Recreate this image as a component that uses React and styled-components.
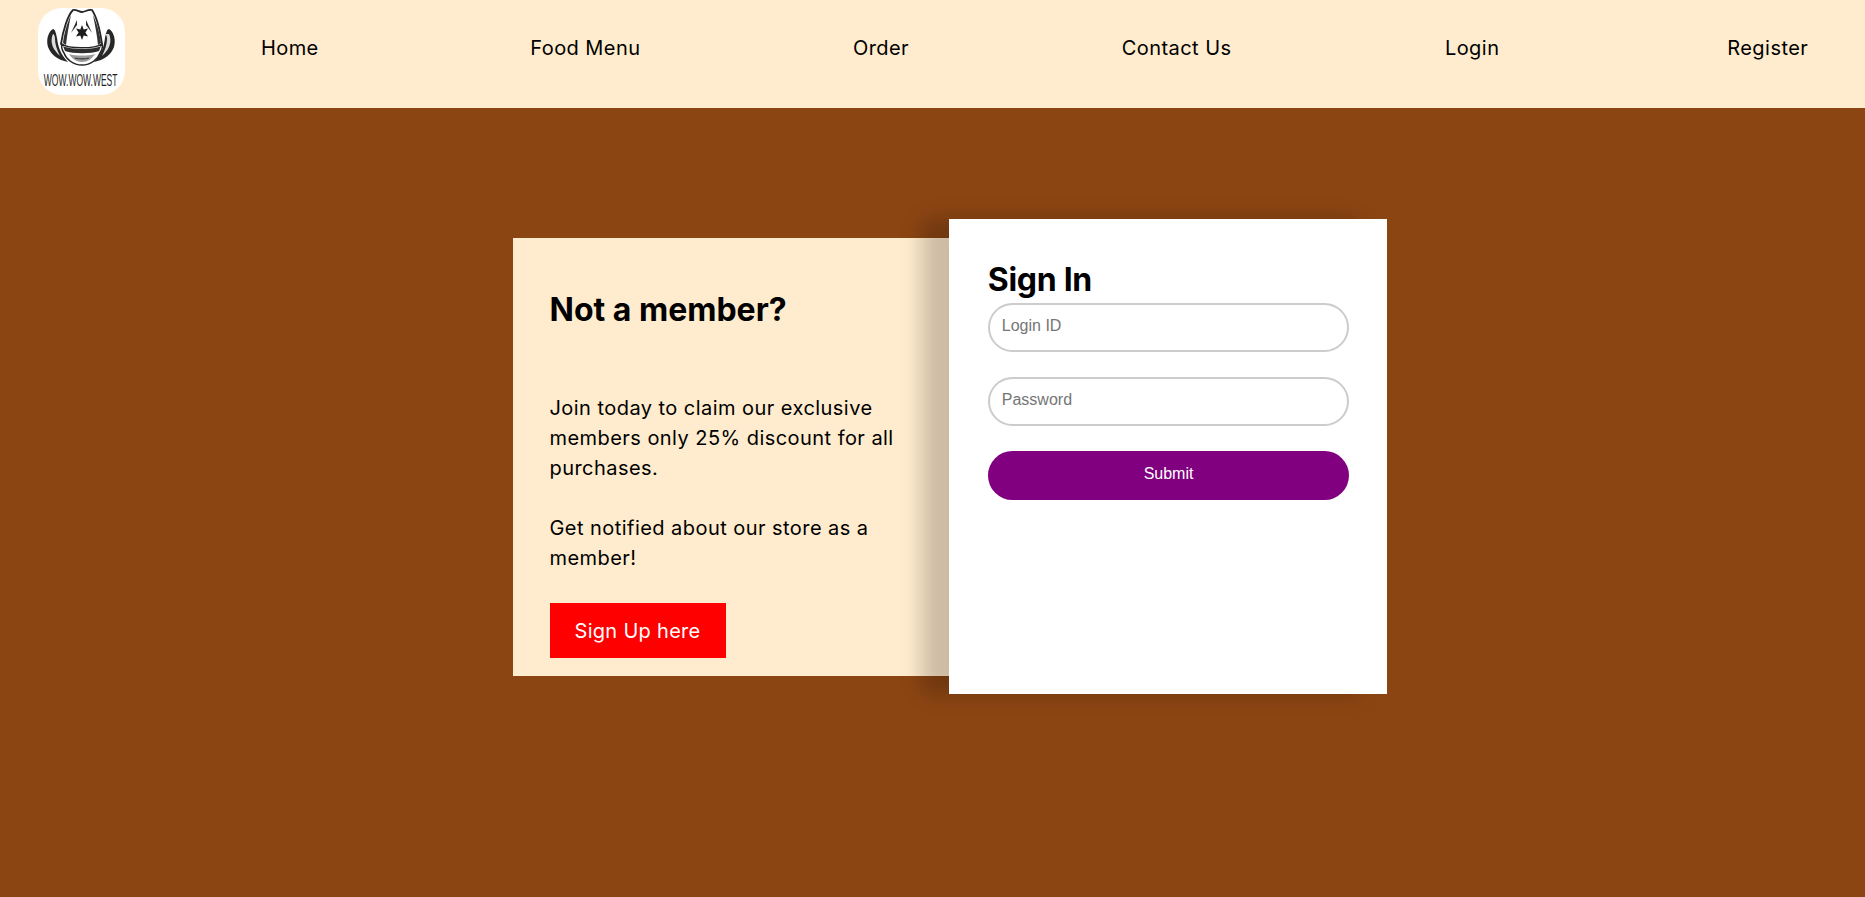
import React from "react";
import styled, { createGlobalStyle } from "styled-components";

const Global = createGlobalStyle`
  html, body { margin: 0; padding: 0; background: #8b4513; overflow: hidden; }
  body { font-family: "Inter", "Liberation Sans", sans-serif; color: #000; }
`;

const Page = styled.div`
  width: 1865px;
  height: 897px;
  overflow: hidden;
  background: #8b4513;
`;

const Header = styled.header`
  height: 108px;
  box-sizing: border-box;
  background: #ffebcd;
  display: flex;
  align-items: flex-start;
  padding: 8px 0 0 38px;
  overflow: hidden;
`;

const LogoBadge = styled.div`
  width: 87px;
  height: 87px;
  flex: none;
  border-radius: 24px;
  background: #fff;
  display: flex;
  flex-direction: column;
  align-items: center;
`;

const HatMark = styled.svg`
  display: block;
  flex: none;
`;

const LogoText = styled.span`
  display: block;
  flex: none;
  margin-left: -2px;
  font: 17px/17px "Liberation Sans", sans-serif;
  color: #1f1f1f;
  white-space: nowrap;
  transform: scaleX(0.5);
`;

const Nav = styled.nav`
  flex: none;
  margin: 28px 0 0 17px;
  display: grid;
  grid-template-columns: repeat(6, 295.6px);
`;

const NavLink = styled.a`
  text-align: center;
  font-size: 20px;
  color: #000;
  letter-spacing: 0.45px;
`;

const Main = styled.main`
  display: flex;
  align-items: center;
  padding: 111px 0 0 512.5px;
`;

const PromoCard = styled.section`
  width: 436.8px;
  height: 438px;
  box-sizing: border-box;
  background: #ffebcd;
  padding: 50px 20px 0 37px;
`;

const LoginCard = styled.section`
  position: relative;
  width: 438px;
  height: 475px;
  box-sizing: border-box;
  background: #fff;
  box-shadow: -27px 0 20px rgba(0, 0, 0, 0.2);
  padding: 39px 38px 0 38.5px;
`;

const PromoTitle = styled.h2`
  margin: 0 0 61.5px;
  font-size: 32px;
  line-height: 44px;
  font-weight: 700;
`;

const LoginTitle = styled.h2`
  margin: 0 0 1px;
  font-size: 32px;
  line-height: 44px;
  font-weight: 700;
  letter-spacing: -0.3px;
`;

const Copy = styled.p`
  margin: 0 0 30px;
  font-size: 20px;
  line-height: 30px;
  letter-spacing: 0.45px;
`;

const SignUp = styled.a`
  display: inline-block;
  background: #f00;
  color: #fff;
  font-size: 20px;
  line-height: 55px;
  padding: 1px 25px 0;
  height: 54px;
  letter-spacing: 0.3px;
`;

const Form = styled.form`
  display: flex;
  flex-direction: column;
  gap: 25px;
`;

const Field = styled.input`
  width: 100%;
  height: 49px;
  box-sizing: border-box;
  border: 2px solid #ccc;
  border-radius: 25px;
  padding: 0 12px 3px;
  font: 16px "Liberation Sans", Arial, sans-serif;
  background: #fff;
  outline: none;
  &::placeholder { color: #757575; }
`;

const Submit = styled.button`
  height: 49px;
  border: 0;
  border-radius: 25px;
  background: #800080;
  color: #fff;
  padding: 0 0 3px;
  font: 16px "Liberation Sans", Arial, sans-serif;
`;

const Logo = () => (
  <LogoBadge>
    <HatMark width="87" height="64" viewBox="0 0 87 64">
      <path d="M15 21c-5 3-7 11-5 18 3 8 10 13 20 15-7-7-10-15-11-24-1-5-2-9-4-9z" fill="#262626" />
      <path d="M15 26c-2 4-2 10 1 15 2 3 4 5 6 7-3-6-5-12-5-17 0-3-1-5-2-5z" fill="#dcdcdc" />
      <path d="M71 21c5 3 7 11 5 18-3 8-10 13-20 15 7-7 10-15 11-24 1-5 2-9 4-9z" fill="#262626" />
      <path d="M71 26c2 4 2 10-1 15-2 3-4 5-6 7 3-6 5-12 5-17 0-3-1-5-2-5z" fill="#dcdcdc" />
      <path d="M35 2c3-1 6 2 9 2s6-3 10-2c4 6 8 20 10 34-3 3-6 5-21 5S25 39 23 36c2-14 7-29 12-34z" fill="#fff" stroke="#262626" strokeWidth="1.8" />
      <path d="M33 7c-3 6-7 18-8 28l3 2c1-10 3-20 5-30z" fill="#333" />
      <path d="M55 7c3 6 7 18 8 28l-3 2c-1-10-3-20-5-30z" fill="#333" />
      <path d="M39 12l-6 13 6-8zM48 12l6 13-6-8z" fill="#2a2a2a" />
      <path d="M44 17l1.700 4.500 4.300-1-2.600 4 2.600 4-4.300-1L44 32l-1.700-4.500-4.300 1 2.600-4-2.600-4 4.300 1z" fill="#1c1c1c" />
      <path d="M24 36c6 5 33 5 40 0 1 3 0 6-2 9-2 6-9 12-18 12s-16-6-18-12c-2-3-3-6-2-9z" fill="#fff" stroke="#262626" strokeWidth="1.500" />
      <path d="M25 38c7 4 31 4 38 0l-2 5c-8 3-26 3-34 0z" fill="#2e2e2e" />
      <path d="M31 46c6 2 20 2 26 0-3 5-8 8-13 8s-10-3-13-8z" fill="#9a9a9a" />
      <path d="M37 50c4 1 10 1 14 0" fill="none" stroke="#3a3a3a" strokeWidth="1.200" />
    </HatMark>
    <LogoText>WOW.WOW.WEST</LogoText>
  </LogoBadge>
);

const links = ["Home", "Food Menu", "Order", "Contact Us", "Login", "Register"];

export default function App() {
  return (
    <Page>
      <Global />
      <Header>
        <Logo />
        <Nav>
          {links.map((l) => <NavLink key={l}>{l}</NavLink>)}
        </Nav>
      </Header>
      <Main>
        <PromoCard>
          <PromoTitle>Not a member?</PromoTitle>
          <Copy>Join today to claim our exclusive members only 25% discount for all purchases.</Copy>
          <Copy>Get notified about our store as a member!</Copy>
          <SignUp>Sign Up here</SignUp>
        </PromoCard>
        <LoginCard>
          <LoginTitle>Sign In</LoginTitle>
          <Form>
            <Field placeholder="Login ID" />
            <Field placeholder="Password" type="password" />
            <Submit type="button">Submit</Submit>
          </Form>
        </LoginCard>
      </Main>
    </Page>
  );
}
